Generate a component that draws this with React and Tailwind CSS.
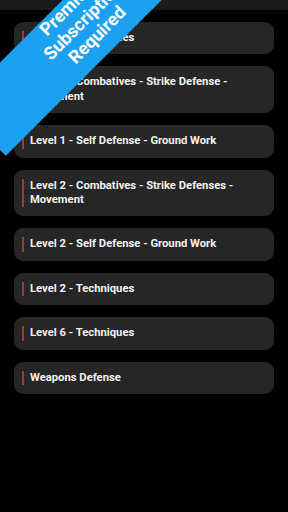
const ITEMS = [
  'Level 1 - Techniques',
  'Level 1 - Combatives - Strike Defense - Movement',
  'Level 1 - Self Defense - Ground Work',
  'Level 2 - Combatives - Strike Defenses - Movement',
  'Level 2 - Self Defense - Ground Work',
  'Level 2 - Techniques',
  'Level 6 - Techniques',
  'Weapons Defense',
]

export default function App() {
  return (
    <div
      className="relative w-[288px] h-[512px] overflow-hidden bg-black"
      style={{ fontFamily: 'Roboto, "Liberation Sans", sans-serif' }}
    >
      <div className="h-[10px] bg-[#1b1b1b]" />

      <div className="flex flex-col gap-[12px] px-[14px] pt-[12px]">
        {ITEMS.map((label, i) => (
          <div key={i} className="rounded-[9px] bg-[#262626] pl-[8px] pr-[12px] py-[9px]">
            <div className="border-l-2 border-[#a03a3e] pl-[6px] text-[11.25px] leading-[14.4px] font-bold text-[#f2f2f2]">
              {label}
            </div>
          </div>
        ))}
      </div>

      {/* premium ribbon */}
      <div className="absolute left-[-63px] top-[-9.7px] w-[300px] h-[69.5px] -rotate-45 bg-[#1ba0f2] flex flex-col items-center justify-center pb-[11px] text-white font-bold text-[18px] leading-[20px]">
        <span>Premium</span>
        <span>Subscription</span>
        <span>Required</span>
      </div>
    </div>
  )
}
